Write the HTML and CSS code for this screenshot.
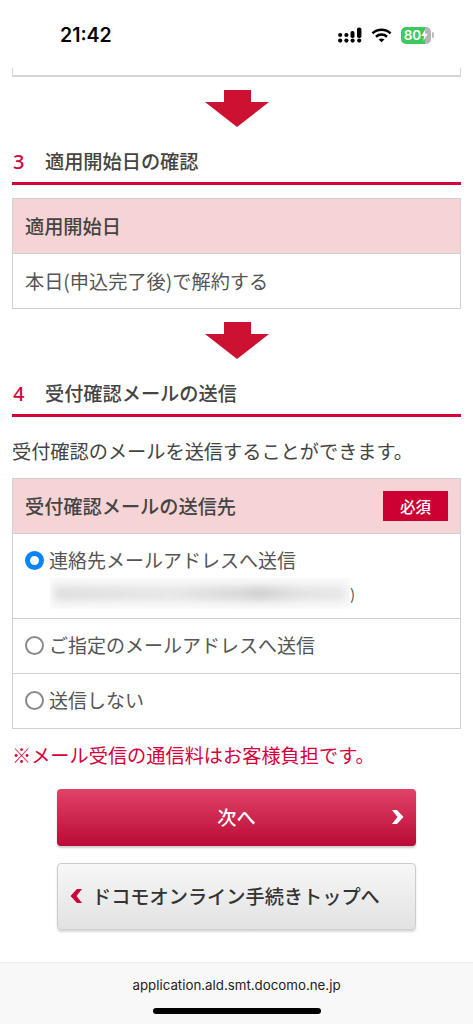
FILE: index.html
```html
<!DOCTYPE html>
<html lang="ja">
<head>
    <meta charset="UTF-8">
    <meta name="viewport" content="width=device-width, initial-scale=1.0">
    <title>受付確認メールの送信</title>
    <link rel="stylesheet" href="styles.css">
</head>
<body>

    <div class="status-bar">
        <span class="clock">21:42</span>
        <div class="status-icons">
            <svg width="24" height="16" viewBox="0 0 24 16" fill="#000">
                <circle cx="2.2" cy="8" r="2.1"/><circle cx="2.2" cy="13.6" r="2.1"/>
                <circle cx="8.4" cy="8" r="2.1"/><circle cx="8.4" cy="13.6" r="2.1"/>
                <rect x="12.5" y="4" width="4" height="7" rx="1.8"/><circle cx="14.6" cy="13.6" r="2.1"/>
                <rect x="19" y="0.5" width="4.4" height="10.5" rx="1.8"/><circle cx="21.2" cy="13.6" r="2.1"/>
            </svg>
            <svg class="wifi" width="21" height="16" viewBox="0 0 22 16" fill="none" stroke="#000" stroke-width="2.6">
                <path d="M1.5 6.2 C6.8 1.2 15.2 1.2 20.5 6.2"/>
                <path d="M5.2 9.8 C8.5 6.8 13.5 6.8 16.8 9.8"/>
                <path d="M11 15.5 L8 12.6 C9.8 11.2 12.2 11.2 14 12.6 Z" fill="#000" stroke="none"/>
            </svg>
            <div class="battery">
                <div class="battery-body">
                    <span>80</span>
                    <svg width="7" height="12" viewBox="0 0 7 12" fill="#fff"><path d="M4.4 0 L0.4 7 H3 L2.4 12 L6.6 4.8 H3.9 Z"/></svg>
                </div>
                <div class="battery-tip"></div>
            </div>
        </div>
    </div>

    <div class="page">
        <div class="prev-box"></div>

        <svg class="flow-arrow" width="64" height="37" viewBox="0 0 64 37"><path d="M19 0 H46 V12 H64 L32 37 L0 12 H19 Z"/></svg>

        <h2 class="step-title"><span class="step-num">3</span>適用開始日の確認</h2>
        <div class="panel">
            <div class="panel-head">適用開始日</div>
            <div class="panel-row">本日(申込完了後)で解約する</div>
        </div>

        <svg class="flow-arrow" width="64" height="37" viewBox="0 0 64 37"><path d="M19 0 H46 V12 H64 L32 37 L0 12 H19 Z"/></svg>

        <h2 class="step-title"><span class="step-num">4</span>受付確認メールの送信</h2>
        <p class="lead">受付確認のメールを送信することができます。</p>
        <div class="panel">
            <div class="panel-head">
                受付確認メールの送信先
                <span class="required">必須</span>
            </div>
            <div class="panel-row option option-mail">
                <div class="option-line"><span class="radio radio-on"></span>連絡先メールアドレスへ送信</div>
                <div class="mail-line">
                    <div class="mail-blur"><div class="mail-smear"></div></div>
                    <span class="mail-end">)</span>
                </div>
            </div>
            <div class="panel-row option">
                <div class="option-line"><span class="radio"></span>ご指定のメールアドレスへ送信</div>
            </div>
            <div class="panel-row option">
                <div class="option-line"><span class="radio"></span>送信しない</div>
            </div>
        </div>

        <p class="notice">※メール受信の通信料はお客様負担です。</p>

        <div class="buttons">
            <button class="btn btn-next">
                次へ
                <svg class="btn-chevron" width="13" height="14" viewBox="0 0 13 14"><path d="M1 0 H6 L12.5 7 L6 14 H1 L6.5 7 Z" fill="#fff"/></svg>
            </button>
            <button class="btn btn-top">
                <svg width="13" height="14" viewBox="0 0 13 14"><path d="M12 0 H7 L0.5 7 L7 14 H12 L6.5 7 Z" fill="#cc0033"/></svg>
                ドコモオンライン手続きトップへ
            </button>
        </div>
    </div>

    <div class="url-bar">
        <span class="url">application.ald.smt.docomo.ne.jp</span>
        <div class="home-bar"></div>
    </div>

</body>
</html>
```

FILE: styles.css
```css
* { margin: 0; padding: 0; box-sizing: border-box; }

body {
    width: 473px;
    height: 1024px;
    overflow: hidden;
    display: flex;
    flex-direction: column;
    background: #fff;
    color: #444;
    font-family: "Noto Sans CJK JP", "Noto Sans", sans-serif;
}

/* Status bar */
.status-bar {
    height: 68px;
    flex-shrink: 0;
    padding: 2px 39px 0 60px;
    display: flex;
    align-items: center;
    justify-content: space-between;
    color: #000;
}

.clock {
    font-family: Inter, sans-serif;
    font-size: 19.5px;
    font-weight: 600;
}

.status-icons {
    display: flex;
    align-items: center;
    gap: 9px;
}

.battery {
    display: flex;
    align-items: center;
    gap: 1px;
}

.battery-body {
    width: 30px;
    height: 17px;
    border-radius: 5px;
    background: linear-gradient(to right, #3ec95e 80%, #b5b5b5 80%);
    color: #fff;
    font-family: Inter, sans-serif;
    font-size: 13.5px;
    font-weight: 600;
    display: flex;
    align-items: center;
    justify-content: center;
}

.battery-tip {
    width: 2px;
    height: 6px;
    background: #bbb;
    border-radius: 0 2px 2px 0;
}

/* Page */
.page {
    flex: 1;
    padding: 0 12px;
    display: flex;
    flex-direction: column;
}

.prev-box {
    height: 9px;
    border: 1px solid #d5d5d5;
    border-top: none;
    border-bottom-width: 2px;
}

.flow-arrow {
    display: block;
    margin: 13px auto 0;
    fill: #cc1133;
    flex-shrink: 0;
}

.step-title {
    margin-top: 17px;
    height: 41px;
    padding: 0 0 0 1px;
    border-bottom: 3px solid #d5003a;
    font-size: 19.2px;
    font-weight: 500;
    line-height: 35px;
    color: #444;
    display: flex;
}

.step-num {
    width: 32px;
    font-family: "Noto Sans", sans-serif;
    font-size: 20px;
    color: #d5003a;
}

.lead {
    margin-top: 20px;
    font-size: 19.2px;
    line-height: 28px;
    white-space: nowrap;
}

.panel {
    border: 1px solid #d0d0d0;
    margin-top: 13px;
}

.panel-head {
    height: 55px;
    padding: 0 12px;
    background: #f6d3d4;
    border-bottom: 1px solid #d0d0d0;
    font-size: 19.2px;
    font-weight: 500;
    display: flex;
    align-items: center;
    justify-content: space-between;
}

.required {
    width: 65px;
    height: 30px;
    background: #cc0033;
    color: #fff;
    font-size: 15.5px;
    display: flex;
    align-items: center;
    justify-content: center;
}

.panel-row {
    height: 54px;
    padding: 0 12px;
    font-size: 19.2px;
    color: #555;
    display: flex;
    align-items: center;
}

.option {
    border-bottom: 1px solid #d0d0d0;
    height: 55px;
    padding-bottom: 2px;
    font-size: 19px;
}

.option:last-child {
    border-bottom: none;
    height: 54px;
}

.option-mail {
    height: 85px;
    flex-direction: column;
    align-items: flex-start;
    justify-content: flex-start;
    padding-top: 12px;
}

.option-line {
    display: flex;
    align-items: center;
    gap: 5px;
    line-height: 28px;
    white-space: nowrap;
}

.radio {
    width: 19px;
    height: 19px;
    border-radius: 50%;
    border: 2px solid #8a8a8a;
    background: #fff;
}

.radio-on {
    border: 5.5px solid #0a84ff;
}

.mail-line {
    display: flex;
    align-items: center;
    margin-left: 25px;
    margin-top: 4px;
}

.mail-blur {
    width: 300px;
    height: 31px;
    overflow: hidden;
    background: #fafafa;
}

.mail-smear {
    height: 15px;
    margin: 8px 4px;
    background: linear-gradient(to right, #ddd, #e6e6e6 40%, #d6d6d6 65%, #cfcfcf 70%, #e2e2e2 85%, #e6e6e6);
    filter: blur(4px);
}

.mail-end {
    font-size: 15px;
    color: #555;
}

.notice {
    margin-top: 12px;
    font-size: 19.2px;
    line-height: 28px;
    color: #d5003a;
    white-space: nowrap;
}

.buttons {
    margin-top: 20px;
    display: flex;
    flex-direction: column;
    align-items: center;
    gap: 17px;
}

.btn {
    position: relative;
    width: 359px;
    border-radius: 4px;
    font-family: inherit;
    font-weight: 500;
    font-size: 19.2px;
    padding-bottom: 2px;
    display: flex;
    align-items: center;
}

.btn-next {
    height: 57px;
    justify-content: center;
    border: none;
    color: #fff;
    background: linear-gradient(to bottom, #e04368, #b90a36);
    box-shadow: 0 2px 2px rgba(0,0,0,0.2);
}

.btn-chevron {
    position: absolute;
    right: 12px;
    top: 21px;
}

.btn-top {
    height: 67px;
    padding-left: 12px;
    gap: 9px;
    border: 1px solid #ccc;
    color: #333;
    background: linear-gradient(to bottom, #f7f7f7, #e2e2e2);
    box-shadow: 0 2px 2px rgba(0,0,0,0.15);
    white-space: nowrap;
}

/* Safari bottom bar */
.url-bar {
    height: 62px;
    flex-shrink: 0;
    background: #f8f8f8;
    border-top: 1px solid #ececec;
    display: flex;
    flex-direction: column;
    align-items: center;
}

.url {
    margin-top: 13px;
    font-family: Inter, sans-serif;
    font-size: 13.3px;
    line-height: 18px;
    color: #222;
}

.home-bar {
    width: 168px;
    height: 6px;
    margin-top: 14px;
    border-radius: 3px;
    background: #000;
}
```
